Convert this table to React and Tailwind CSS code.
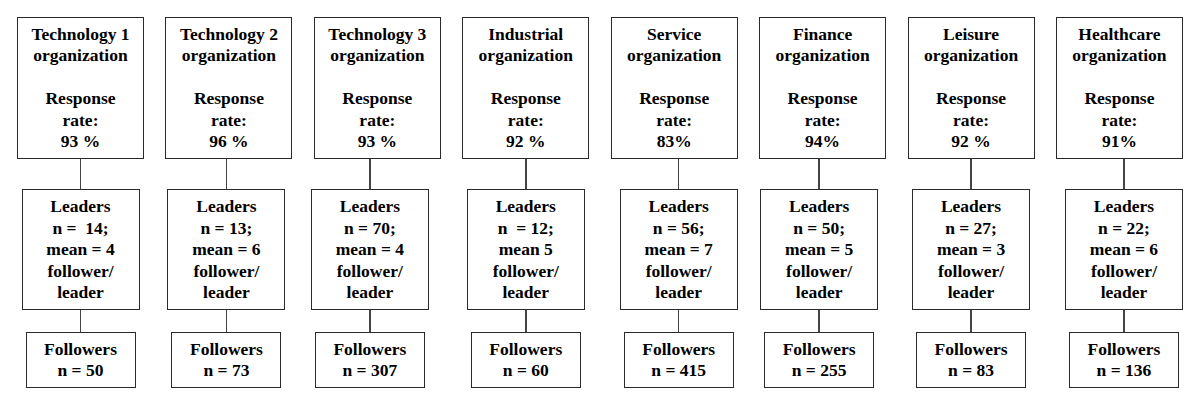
const ORGS = [
  { name: ['Technology 1', 'organization'], rate: '93 %', leaders: 'n =  14;', mean: 'mean = 4', followers: 'n = 50', shift: '' },
  { name: ['Technology 2', 'organization'], rate: '96 %', leaders: 'n = 13;', mean: 'mean = 6', followers: 'n = 73', shift: 'mr-[5px]' },
  { name: ['Technology 3', 'organization'], rate: '93 %', leaders: 'n = 70;', mean: 'mean = 4', followers: 'n = 307', shift: 'mr-[15px]' },
  { name: ['Industrial', 'organization'], rate: '92 %', leaders: 'n  = 12;', mean: 'mean 5', followers: 'n = 60', shift: '' },
  { name: ['Service', 'organization'], rate: '83%', leaders: 'n = 56;', mean: 'mean = 7', followers: 'n = 415', shift: 'ml-[9px]' },
  { name: ['Finance', 'organization'], rate: '94%', leaders: 'n = 50;', mean: 'mean = 5', followers: 'n = 255', shift: 'mr-[7px]' },
  { name: ['Leisure', 'organization'], rate: '92 %', leaders: 'n = 27;', mean: 'mean = 3', followers: 'n = 83', shift: '' },
  { name: ['Healthcare', 'organization'], rate: '91%', leaders: 'n = 22;', mean: 'mean = 6', followers: 'n = 136', shift: 'ml-[9px]' },
];

function Box({ className, lines }) {
  return (
    <div className={'border-[1.5px] border-[#2a2a2a] bg-white ' + className}>
      {lines.map((t, i) => (
        <p
          key={i}
          className="text-center whitespace-pre font-['Liberation_Serif'] font-bold text-[17.5px] leading-[21.5px] text-black"
        >
          {t}
        </p>
      ))}
    </div>
  );
}

function Line({ h }) {
  return <div className={'w-[1.5px] bg-[#444] ' + h} />;
}

function Column({ org }) {
  return (
    <div className="w-[127px] flex flex-col items-center">
      {/* Organisation */}
      <Box
        className="w-[127px] h-[142px] pt-[5.5px]"
        lines={[org.name[0], org.name[1], ' ', 'Response', 'rate:', org.rate]}
      />

      {/* Leaders + followers */}
      <div className={'flex flex-col items-center ' + org.shift}>
        <Line h="h-[30px]" />
        <Box
          className="w-[118px] h-[121px] pt-[6px]"
          lines={['Leaders', org.leaders, org.mean, 'follower/', 'leader']}
        />
        <Line h="h-[22px]" />
        <Box className="w-[110px] h-[56px] pt-[5.5px]" lines={['Followers', org.followers]} />
      </div>
    </div>
  );
}

export default function App() {
  return (
    <div className="w-[1200px] h-[405px] bg-white pt-[17px] pl-[17px] font-['Liberation_Serif'] font-bold">
      <div className="flex gap-[21.43px]">
        {ORGS.map((org) => (
          <Column key={org.name[0]} org={org} />
        ))}
      </div>
    </div>
  );
}
